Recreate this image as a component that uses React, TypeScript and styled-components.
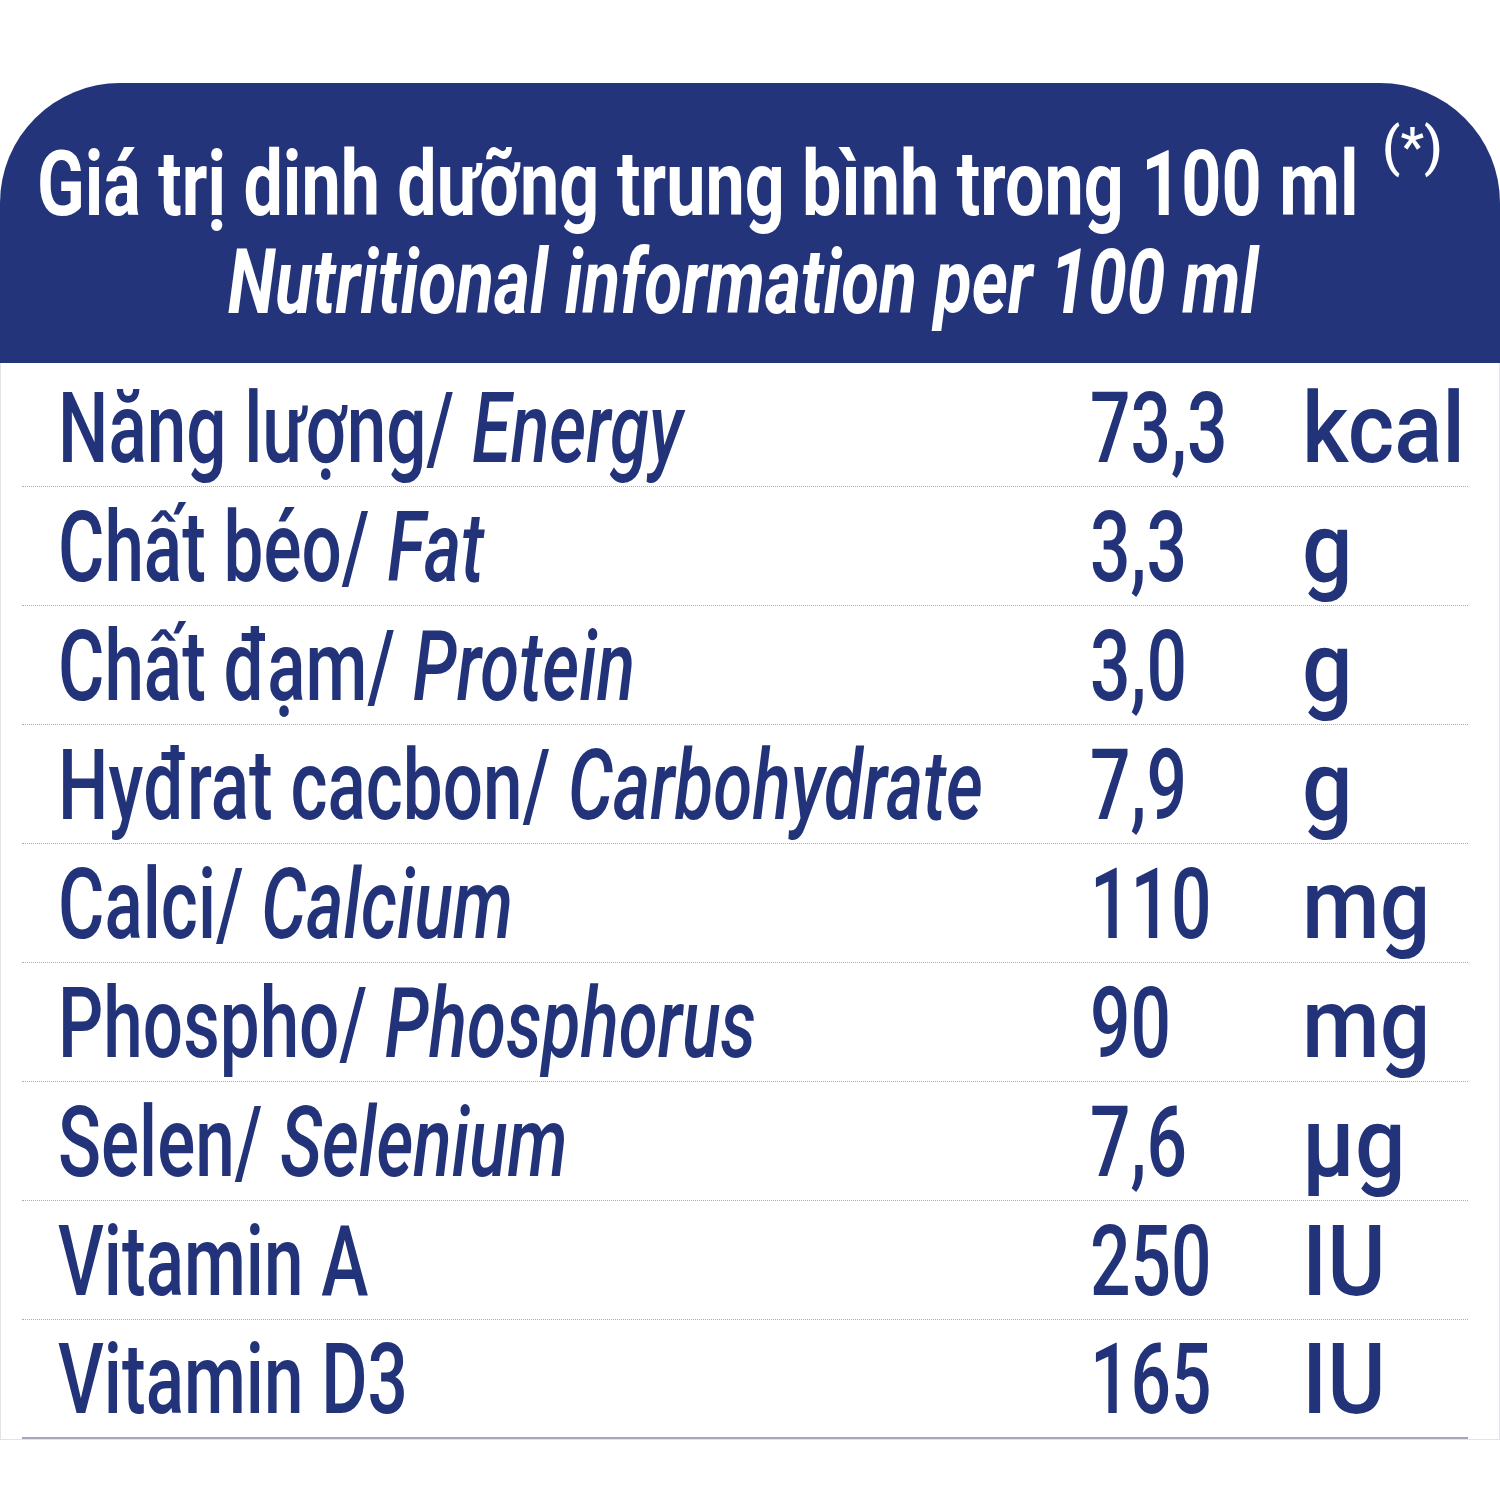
import React from "react";
import styled, { createGlobalStyle } from "styled-components";

const GlobalStyle = createGlobalStyle`
    html, body {
        margin: 0;
        padding: 0;
        background: #ffffff;
    }
`;

const Page = styled.div`
    width: 1500px;
    padding-top: 83px;
    font-family: Roboto, "Liberation Sans", sans-serif;
`;

const Header = styled.header`
    display: flex;
    flex-direction: column;
    align-items: center;
    height: 280px;
    box-sizing: border-box;
    padding: 52px 14px 0 0;
    background: #24347a;
    border-radius: 120px 120px 0 0;
    color: #ffffff;
`;

const TitleLine = styled.div<{ $italic?: boolean; $scale: number }>`
    flex: none;
    font-size: 91px;
    font-weight: 700;
    line-height: 98px;
    font-style: ${(p) => (p.$italic ? "italic" : "normal")};
    white-space: nowrap;
    transform: scaleX(${(p) => p.$scale});
`;

const Mark = styled.span`
    display: inline-block;
    margin: 0 26px 0 31px;
    font-size: 53px;
    font-weight: 500;
    line-height: 0;
    transform: translateY(-50px) scaleX(1.3);
    transform-origin: left;
`;

const Body = styled.div`
    padding-top: 5px;
    border: 1px solid #e2e3e8;
    border-top: none;
`;

const Row = styled.div<{ $last?: boolean }>`
    display: grid;
    grid-template-columns: 1032px 212px 1fr;
    align-items: end;
    height: 119px;
    box-sizing: border-box;
    margin: 0 31px 0 21px;
    padding-left: 36px;
    border-bottom: ${(p) => (p.$last ? "2px solid #a3a6b6" : "1px dotted #a9acbd")};
    color: #22337a;
`;

const Cell = styled.div<{ $scale: number }>`
    font-size: 98px;
    font-weight: 500;
    line-height: 115px;
    white-space: nowrap;
    transform: scaleX(${(p) => p.$scale});
    transform-origin: left;

    em {
        font-style: italic;
    }
`;

type Item = { vi: string; en?: string; value: string; unit: string };

const items: Item[] = [
    { vi: "Năng lượng/ ", en: "Energy", value: "73,3", unit: "kcal" },
    { vi: "Chất béo/ ", en: "Fat", value: "3,3", unit: "g" },
    { vi: "Chất đạm/ ", en: "Protein", value: "3,0", unit: "g" },
    { vi: "Hyđrat cacbon/ ", en: "Carbohydrate", value: "7,9", unit: "g" },
    { vi: "Calci/ ", en: "Calcium", value: "110", unit: "mg" },
    { vi: "Phospho/ ", en: "Phosphorus", value: "90", unit: "mg" },
    { vi: "Selen/ ", en: "Selenium", value: "7,6", unit: "µg" },
    { vi: "Vitamin A", value: "250", unit: "IU" },
    { vi: "Vitamin D3", value: "165", unit: "IU" },
];

const App: React.FC = () => {
    return (
        <>
            <GlobalStyle />
            <Page>
                <Header>
                    <TitleLine $scale={0.77}>
                        Giá trị dinh dưỡng trung bình trong 100 ml<Mark>(*)</Mark>
                    </TitleLine>
                    <TitleLine $italic $scale={0.761}>
                        Nutritional information per 100 ml
                    </TitleLine>
                </Header>
                <Body>
                    {items.map((item, i) => (
                        <Row key={item.vi} $last={i === items.length - 1}>
                            <Cell $scale={0.725}>
                                {item.vi}
                                {item.en && <em>{item.en}</em>}
                            </Cell>
                            <Cell $scale={0.728}>{item.value}</Cell>
                            <Cell $scale={0.91}>{item.unit}</Cell>
                        </Row>
                    ))}
                </Body>
            </Page>
        </>
    );
};

export default App;
